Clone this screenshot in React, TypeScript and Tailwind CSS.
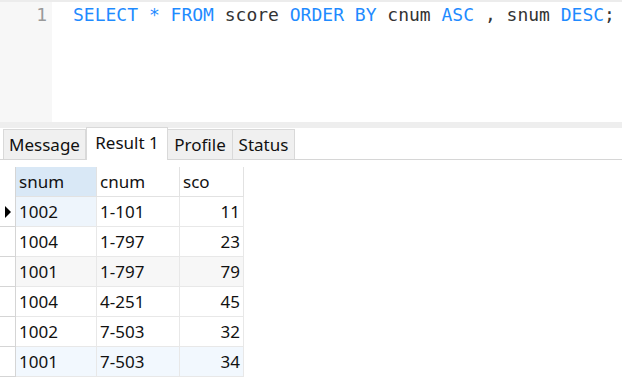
import React from "react";

const rows = [
  { s: "1002", c: "1-101", v: "11", bg: "bg-white", cur: true },
  { s: "1004", c: "1-797", v: "23", bg: "bg-white" },
  { s: "1001", c: "1-797", v: "79", bg: "bg-[#f7f7f7]" },
  { s: "1004", c: "4-251", v: "45", bg: "bg-white" },
  { s: "1002", c: "7-503", v: "32", bg: "bg-white" },
  { s: "1001", c: "7-503", v: "34", bg: "bg-[#f2f8fe]" },
];

const K = ({ children }: { children: React.ReactNode }) => (
  <span className="text-[#1f8bff]">{children}</span>
);

export default function App() {
  return (
    <div className="w-[622px] h-[392px] bg-white flex flex-col overflow-hidden">
      {/* editor */}
      <div className="h-[122px] flex border-t-2 border-[#ececec]">
        <div className="w-[52px] bg-[#f7f7f7] text-right pr-[5px] pt-[1px] text-[18px] leading-[24px] text-[#9a9a9a] [font-family:'DejaVu_Sans_Mono',monospace]">
          1
        </div>
        <div className="flex-1 pl-[21px] pt-[1px] text-[18px] leading-[24px] text-[#333] whitespace-pre [font-family:'DejaVu_Sans_Mono',monospace]">
          <K>SELECT</K> <K>*</K> <K>FROM</K> score <K>ORDER</K> <K>BY</K> cnum <K>ASC</K> , snum <K>DESC</K>;
        </div>
      </div>
      <div className="h-[6px] bg-[#eeeeee]" />
      {/* tabs */}
      <div className="h-[32px] flex items-end pl-[3px] border-b border-[#d6d6d6] text-[17px] text-[#111] [font-family:'Noto_Sans',sans-serif]">
        <div className="h-[30px] w-[83px] flex items-center justify-center bg-[#f0f0f0] border border-b-0 border-[#d9d9d9]">
          Message
        </div>
        <div className="h-[33px] -mb-px w-[82px] flex items-center justify-center bg-white border border-b-0 border-[#d9d9d9] pb-[3px]">
          Result 1
        </div>
        <div className="h-[30px] w-[65px] flex items-center justify-center bg-[#f0f0f0] border border-b-0 border-l-0 border-[#d9d9d9]">
          Profile
        </div>
        <div className="h-[30px] w-[62px] flex items-center justify-center bg-[#f0f0f0] border border-b-0 border-l-0 border-[#d9d9d9]">
          Status
        </div>
      </div>
      {/* grid */}
      <div className="pt-[7px] text-[17px] text-[#111] [font-family:'Noto_Sans',sans-serif]">
        <div className="flex h-[30px]">
          <div className="w-[16px] border-r border-[#d5d5d5]" />
          <div className="w-[81px] bg-[#d9e8f6] border-r border-b border-[#e2e2e2] pl-[3px] flex items-center">snum</div>
          <div className="w-[83px] border-r border-b border-[#e2e2e2] pl-[3px] flex items-center">cnum</div>
          <div className="w-[64px] border-r border-b border-[#e2e2e2] pl-[3px] flex items-center">sco</div>
        </div>
        {rows.map((r, i) => (
          <div key={i} className="flex h-[30px]">
            <div className="w-[16px] border-r border-b border-[#d5d5d5] flex items-center justify-center bg-white">
              {r.cur ? (
                <svg width="8" height="12" viewBox="0 0 8 12">
                  <path d="M1 0 L7 6 L1 12 Z" fill="#000" />
                </svg>
              ) : null}
            </div>
            <div className={`w-[81px] ${r.cur ? "bg-[#eef5fc]" : r.bg} border-r border-b border-[#e8e8e8] pl-[3px] flex items-center`}>
              {r.s}
            </div>
            <div className={`w-[83px] ${r.bg} border-r border-b border-[#e8e8e8] pl-[3px] flex items-center`}>
              {r.c}
            </div>
            <div className={`w-[64px] ${r.bg} border-r border-b border-[#e8e8e8] pr-[3px] flex items-center justify-end`}>
              {r.v}
            </div>
          </div>
        ))}
      </div>
    </div>
  );
}
